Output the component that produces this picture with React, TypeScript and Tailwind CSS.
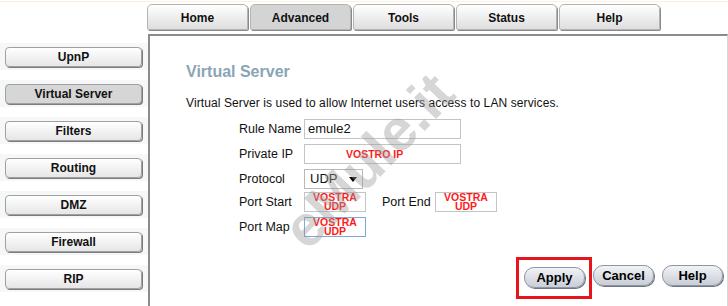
const tabs = ["Home", "Advanced", "Tools", "Status", "Help"];
const sideItems = ["UpnP", "Virtual Server", "Filters", "Routing", "DMZ", "Firewall", "RIP"];

const RedNote = ({ lines }: { lines: string[] }) => (
  <span className="flex flex-col items-center font-bold text-[10.5px] leading-[9px] text-[#ff1a1a] bg-white px-[1px]">
    {lines.map((l) => (
      <span key={l}>{l}</span>
    ))}
  </span>
);

const PillButton = ({ label }: { label: string }) => (
  <button className="w-[61px] h-[21px] rounded-[10px] border border-[#8e96a4] bg-gradient-to-b from-[#f1f3f6] to-[#c9cdd6] shadow-[1px_1px_0_#6f7682] text-[13px] font-bold text-black leading-none">
    {label}
  </button>
);

export default function App() {
  return (
    <div className="relative w-[728px] h-[306px] overflow-hidden bg-white font-['Liberation_Sans',Arial,sans-serif] text-[#111]">
      <div className="h-[1px] mt-[1px] bg-[#fbeee2]" />

      {/* top tabs */}
      <div className="flex gap-[2px] pl-[147px] mt-[2px]">
        {tabs.map((t) => (
          <div
            key={t}
            className={`w-[101px] h-[26px] flex items-center justify-center pt-[1px] rounded-t-[5px] rounded-b-[2px] border border-[#b4b4b4] shadow-[1px_1px_0_#8a8a8a] text-[12px] font-bold ${
              t === "Advanced"
                ? "bg-[#d4d4d4]"
                : "bg-gradient-to-b from-[#ffffff] to-[#dedede]"
            }`}
          >
            {t}
          </div>
        ))}
      </div>

      <div className="flex mt-[4px] h-[272px]">
        {/* sidebar */}
        <div className="w-[148px] flex flex-col gap-[10px] pt-[9px]">
          {sideItems.map((s) => (
            <div key={s} className="h-[27px] bg-[#f6f7f9] flex items-center pl-[5px] pr-[5px]">
              <div
                className={`w-[137px] h-[20px] flex items-center justify-center rounded-[4px] border border-[#a0a0a0] shadow-[1px_1px_0_#7c7c7c] text-[12px] font-bold ${
                  s === "Virtual Server"
                    ? "bg-[#d6d6d6]"
                    : "bg-gradient-to-b from-[#ffffff] to-[#e6e6e6]"
                }`}
              >
                {s}
              </div>
            </div>
          ))}
        </div>

        {/* content panel */}
        <div className="flex-1 border-l-2 border-t-2 border-[#8c8c8c] border-r border-r-[#d8d8d8] pl-[36px] pt-[27px] pr-[4px]">
          <h1 className="text-[16px] leading-[18px] font-bold text-[#8aa5b5]">Virtual Server</h1>
          <p className="mt-[15px] text-[12px] leading-[14px] tracking-[0.1px] whitespace-nowrap">
            Virtual Server is used to allow Internet users access to LAN services.
          </p>

          <div className="mt-[9px] pl-[53px] flex flex-col text-[12.5px] whitespace-nowrap">
            <div className="flex items-center h-[20px]">
              <span className="w-[65px] shrink-0">Rule Name</span>
              <div className="w-[157px] h-[20px] border border-[#c4c4c4] flex items-center px-[3px] text-[13px]">emule2</div>
            </div>
            <div className="flex items-center h-[20px] mt-[5px]">
              <span className="w-[65px] shrink-0">Private IP</span>
              <div className="w-[157px] h-[20px] border border-[#c4c4c4] flex items-center pl-[40px]">
                <RedNote lines={["VOSTRO IP"]} />
              </div>
            </div>
            <div className="flex items-center h-[20px] mt-[5px]">
              <span className="w-[65px] shrink-0">Protocol</span>
              <div className="w-[59px] h-[20px] border border-[#b8b8b8] flex items-center justify-between px-[5px] text-[13px]">
                <span>UDP</span>
                <svg width="8" height="5" viewBox="0 0 8 5">
                  <path d="M0 0h8L4 5z" fill="#000" />
                </svg>
              </div>
            </div>
            <div className="flex items-center h-[20px] mt-[3px]">
              <span className="w-[65px] shrink-0">Port Start</span>
              <div className="w-[62px] h-[20px] border border-[#c4c4c4] flex items-center justify-center">
                <RedNote lines={["VOSTRA", "UDP"]} />
              </div>
              <span className="ml-[16px] w-[53px] shrink-0">Port End</span>
              <div className="w-[62px] h-[20px] border border-[#c4c4c4] flex items-center justify-center">
                <RedNote lines={["VOSTRA", "UDP"]} />
              </div>
            </div>
            <div className="flex items-center h-[20px] mt-[5px]">
              <span className="w-[65px] shrink-0">Port Map</span>
              <div className="w-[62px] h-[20px] border border-[#7fa9d1] flex items-center justify-center">
                <RedNote lines={["VOSTRA", "UDP"]} />
              </div>
            </div>
          </div>

          <div className="mt-[28px] flex justify-end gap-[8px]">
            <div className="relative">
              <PillButton label="Apply" />
              <div className="absolute -left-[8px] -top-[8px] -right-[7px] -bottom-[10px] border-[3px] border-[#e8141c] pointer-events-none" />
            </div>
            <PillButton label="Cancel" />
            <PillButton label="Help" />
          </div>
        </div>
      </div>

      {/* watermark */}
      <div className="absolute left-[368px] top-[160px] -translate-x-1/2 -translate-y-1/2 -rotate-[46deg] text-[58px] font-bold text-[#9a9a9a] opacity-40 pointer-events-none whitespace-nowrap font-['Liberation_Sans',Arial,sans-serif]">
        eMule.it
      </div>
    </div>
  );
}
